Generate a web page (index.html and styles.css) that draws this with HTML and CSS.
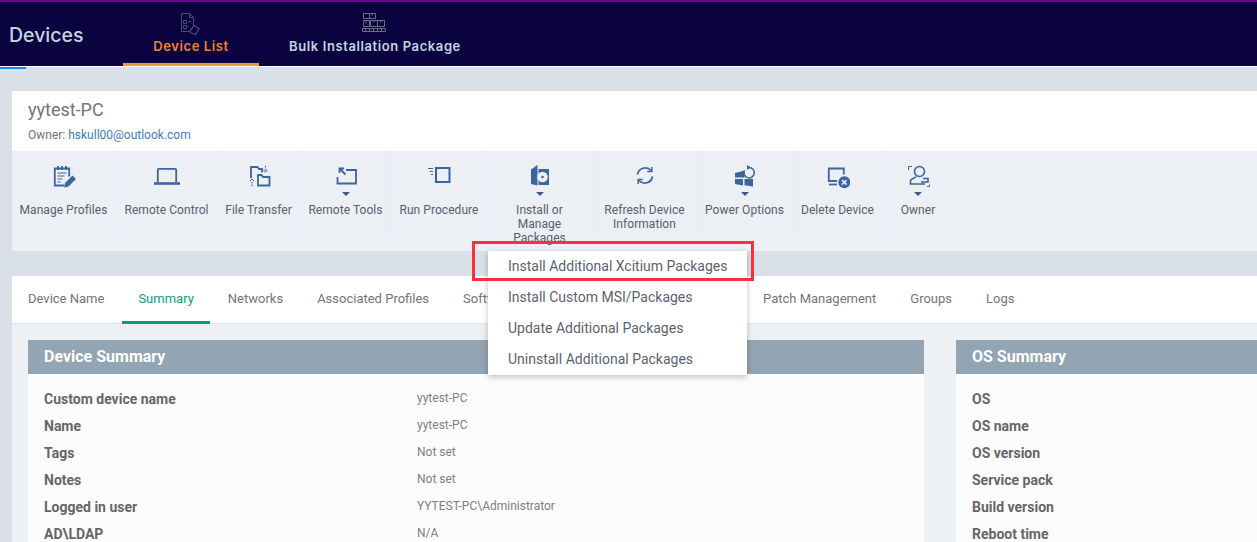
FILE: index.html
```html
<!DOCTYPE html>
<html lang="en">
<head>
  <meta charset="UTF-8" />
  <title>Devices</title>
  <link rel="stylesheet" href="styles.css">
</head>
<body>

<header class="topbar">
  <h1 class="topbar-title">Devices</h1>
  <nav class="topnav">
    <a class="topnav-item topnav-active">
      <svg class="topnav-icon" width="28" height="24" viewBox="0 0 28 24" fill="none" stroke="#4d4a75" stroke-width="1">
        <path d="M4.500 1.500h8l4 4v9M16.500 5.500h-4v-4M4.500 1.500v18h8"/>
        <path d="M6.500 8.500h3v3h-3zM6.500 13.500h3v3h-3zM11 9.500h3M11 14.500h1"/>
        <path d="M13 19l4-5.500 5 3-3.500 6-5-2z" stroke-width="1.300"/>
      </svg>
      <span>Device List</span>
    </a>
    <a class="topnav-item">
      <svg class="topnav-icon" width="28" height="24" viewBox="0 0 28 24" fill="none" stroke="#6e6c8e" stroke-width="1">
        <path d="M2.500 1.500h6v5h-6zM8.500 1.500h6v5h-6zM2.500 8.500h6v6h-6zM9.500 8.500h7v6h-7zM16.500 8.500h7v6h-7z"/>
        <path d="M11 1.500v2M5 8.500v3M13 8.500v2M20 8.500v2"/>
        <path d="M1.500 16.500h23v3h-23z"/>
        <path d="M4 18h1M8 18h1M12 18h1M16 18h1M20 18h1" stroke-width="2"/>
      </svg>
      <span>Bulk Installation Package</span>
    </a>
  </nav>
</header>
<div class="progress"></div>

<main class="page">
  <section class="device-head">
    <h2 class="device-name">yytest-PC</h2>
    <p class="device-owner">Owner: <a class="owner-link">hskull00@outlook.com</a></p>
  </section>

  <section class="toolbar">
    <div class="tool tool-1">
      <svg class="tool-icon" width="26" height="24" viewBox="0 0 26 24" fill="none" stroke="#3a659f" stroke-width="1.800">
        <path d="M13 20.500H3.800V3.500h14.400v8"/>
        <path d="M7 1v4M11 1v4M15 1v4"/>
        <path d="M6.500 8h9M6.500 11h7M6.500 14h5M6.500 17h3" stroke-width="1.200"/>
        <path d="M13 22.500l1-4.500 7.500-7.500 3.500 3.500-7.500 7.500z" fill="#3a659f" stroke="none"/>
      </svg>
      <span>Manage Profiles</span>
    </div>
    <div class="tool tool-2">
      <svg class="tool-icon" width="28" height="24" viewBox="0 0 28 24" fill="none" stroke="#3a659f" stroke-width="1.800">
        <path d="M4.800 17V4.800q0-1 1-1h16.400q1 0 1 1V17"/>
        <path d="M1 18.500h26" stroke-width="2.600"/>
      </svg>
      <span>Remote Control</span>
    </div>
    <div class="tool tool-3">
      <svg class="tool-icon" width="24" height="24" viewBox="0 0 24 24" fill="none" stroke="#3a659f" stroke-width="1.800">
        <path d="M4 13V2h6.500l1.500 2h3v3.500"/>
        <path d="M11 10h3.500l1.500 2h6.500v8.500H11z"/>
        <path d="M18.500 1v5.500M5 21v-5.500" stroke-width="1.200" stroke-dasharray="1.500 1.200"/>
        <path d="M16.500 5l2 2.200 2-2.200M3 16l2-2.200 2 2.200" stroke-width="1"/>
      </svg>
      <span>File Transfer</span>
    </div>
    <div class="tool tool-4">
      <svg class="tool-icon" width="24" height="24" viewBox="0 0 24 24" fill="none" stroke="#3a659f" stroke-width="1.800">
        <path d="M12 5h10v13.500H3.500V12"/>
        <path d="M5.500 3.500l6 6M5.500 8V3.500H10" stroke-width="1.800"/>
      </svg>
      <i class="caret"></i>
      <span>Remote Tools</span>
    </div>
    <div class="tool tool-5">
      <svg class="tool-icon" width="24" height="24" viewBox="0 0 24 24" fill="none" stroke="#3a659f" stroke-width="2">
        <path d="M9 3h13.500v14H9z"/>
        <path d="M1 3.500h5M2.500 6.500h3.500M4 9.500h2" stroke-width="1.200"/>
      </svg>
      <span>Run Procedure</span>
    </div>
    <div class="tool tool-6">
      <svg class="tool-icon" width="24" height="24" viewBox="0 0 24 24">
        <path d="M3 4.500 9.500 0V20.500L3 19z" fill="#3a659f"/>
        <path d="M10.500 4H21V20H10.500z" fill="#3a659f"/>
        <circle cx="14.500" cy="12" r="5.300" fill="#eceff4"/>
        <circle cx="14.500" cy="12" r="1.300" fill="#3a659f"/>
      </svg>
      <i class="caret"></i>
      <span class="label-narrow">Install or Manage Packages</span>
    </div>
    <div class="tool tool-7">
      <svg class="tool-icon" width="24" height="24" viewBox="0 0 24 24" fill="none" stroke="#3a659f" stroke-width="1.800">
        <path d="M4.500 9.500a7.800 7.800 0 0 1 13.500-4"/>
        <path d="M19.500 11.500a7.800 7.800 0 0 1-13.500 4"/>
        <path d="M18.800 2v4.500h-4.500M5.200 19v-4.500h4.500" stroke-width="1.500"/>
      </svg>
      <span>Refresh Device Information</span>
    </div>
    <div class="tool tool-8">
      <svg class="tool-icon" width="24" height="24" viewBox="-1 0 24 24">
        <path d="M1 8 9 6v6.500H1zM1 14h8v6.500L1 19zM10.500 14H19v7.500l-8.500-1.300z" fill="#3a659f"/>
        <path d="M9 6 10.500 5.500v7H9z" fill="#3a659f"/>
        <path d="M15 2.500a5.200 5.200 0 1 1-4.500 2.800" fill="none" stroke="#3a659f" stroke-width="1.500"/>
        <path d="M13 0l3.500 2.500-3.500 2.500z" fill="#3a659f"/>
      </svg>
      <i class="caret"></i>
      <span>Power Options</span>
    </div>
    <div class="tool tool-9">
      <svg class="tool-icon" width="24" height="24" viewBox="0 0 24 24" fill="none" stroke="#3a659f" stroke-width="1.800">
        <path d="M11 16H2.800V3.500h15V9.500"/>
        <path d="M3 19.500h8" stroke-width="1.800"/>
        <circle cx="18.300" cy="17.300" r="6" fill="#3a659f" stroke="none"/>
        <path d="M16 15l4.600 4.600M20.600 15l-4.600 4.600" stroke="#eceff4" stroke-width="1.600"/>
      </svg>
      <span>Delete Device</span>
    </div>
    <div class="tool tool-10">
      <svg class="tool-icon" width="24" height="24" viewBox="0 0 24 24" fill="none" stroke="#3a659f" stroke-width="1.600">
        <circle cx="13.500" cy="6.500" r="5"/>
        <path d="M10 11.500c-1 2.200-5 2-5.500 4v3.500h14.500"/>
        <path d="M17 13.500h5v3.500h-7" stroke-width="1.600"/>
        <path d="M2.500 5V1.500h3.500M23.500 19.500v2h-2.500" stroke-width="1"/>
      </svg>
      <i class="caret"></i>
      <span>Owner</span>
    </div>
  </section>

  <div class="gap"></div>

  <nav class="tabs">
    <a class="tab">Device Name</a>
    <a class="tab tab-active">Summary</a>
    <a class="tab">Networks</a>
    <a class="tab">Associated Profiles</a>
    <a class="tab tab-hidden">Software Inventory</a>
    <a class="tab">Patch Management</a>
    <a class="tab">Groups</a>
    <a class="tab">Logs</a>
  </nav>

  <section class="content">
    <div class="panel panel-device">
      <h3 class="panel-title">Device Summary</h3>
      <div class="panel-body">
        <div class="row"><b>Custom device name</b><span>yytest-PC</span></div>
        <div class="row"><b>Name</b><span>yytest-PC</span></div>
        <div class="row"><b>Tags</b><span>Not set</span></div>
        <div class="row"><b>Notes</b><span>Not set</span></div>
        <div class="row"><b>Logged in user</b><span>YYTEST-PC\Administrator</span></div>
        <div class="row"><b>AD\LDAP</b><span>N/A</span></div>
      </div>
    </div>
    <div class="panel panel-os">
      <h3 class="panel-title">OS Summary</h3>
      <div class="panel-body">
        <div class="row"><b>OS</b></div>
        <div class="row"><b>OS name</b></div>
        <div class="row"><b>OS version</b></div>
        <div class="row"><b>Service pack</b></div>
        <div class="row"><b>Build version</b></div>
        <div class="row"><b>Reboot time</b></div>
      </div>
    </div>
  </section>
</main>

<ul class="menu">
  <li>Install Additional Xcitium Packages</li>
  <li>Install Custom MSI/Packages</li>
  <li>Update Additional Packages</li>
  <li>Uninstall Additional Packages</li>
</ul>
<div class="highlight"></div>

</body>
</html>
```

FILE: styles.css
```css
html, body {
  margin: 0;
  padding: 0;
  height: 542px;
  overflow: hidden;
}
body {
  font-family: Roboto, "Liberation Sans", sans-serif;
  background-color: #d9e0e8;
  color: #666;
  position: relative;
}
.topbar {
  display: flex;
  height: 64px;
  background-color: #0a0340;
  border-top: 2px solid #6c0a8c;
  border-bottom: 1px solid #fff;
}
.topbar-title {
  margin: 0;
  width: 123px;
  padding: 21px 0 0 9px;
  box-sizing: border-box;
  font-family: Inter, sans-serif;
  font-size: 19.500px;
  font-weight: 500;
  line-height: 24px;
  color: #c5d3e0;
}
.topnav {
  display: flex;
}
.topnav-item {
  display: flex;
  flex-direction: column;
  align-items: center;
  box-sizing: border-box;
  height: 64px;
  padding-top: 10px;
  font-family: Inter, sans-serif;
  font-size: 13px;
  font-weight: 600;
  letter-spacing: 0.6px;
  color: #c5d3e0;
}
.topnav-item:first-child {
  width: 136px;
}
.topnav-item:last-child {
  width: 232px;
}
.topnav-icon {
  display: block;
  height: 24px;
}
.topnav-item span {
  margin-top: 1px;
  line-height: 18px;
}
.topnav-active {
  color: #f0842c;
  border-bottom: 3px solid #f39a36;
}
.progress {
  width: 26px;
  height: 2px;
  background-color: #1e88e5;
}
.page {
  margin: 22px 0 0 12px;
}
.device-head {
  height: 60px;
  background-color: #fff;
  padding: 8px 0 0 16px;
  box-sizing: border-box;
}
.device-name {
  margin: 0;
  font-size: 18px;
  font-weight: 400;
  line-height: 22px;
  color: #757575;
}
.device-owner {
  margin: 7px 0 0;
  font-size: 12px;
  line-height: 14px;
  color: #757575;
}
.owner-link {
  color: #3f7cc4;
}
.toolbar {
  display: flex;
  height: 100px;
  background-color: #eceff4;
}
.tool {
  position: relative;
  box-sizing: border-box;
  height: 87px;
  padding-top: 14px;
  text-align: center;
  font-size: 12px;
  font-weight: 400;
  line-height: 14px;
  letter-spacing: 0.05px;
  color: #57606f;
  border-right: 1px solid #e8ebf1;
}
.tool span {
  position: absolute;
  top: 52px;
  left: 0;
  right: 0;
}
.tool .label-narrow {
  left: 20px;
  right: 20px;
}
.tool-icon {
  display: block;
  margin: 0 auto;
}
.caret {
  display: block;
  width: 0;
  margin: 3px auto 0;
  border: 4px solid transparent;
  border-top: 4px solid #3a5a8a;
  border-bottom: 0;
}
.tool-1 { width: 104px; }
.tool-2 { width: 102px; }
.tool-3 { width: 82px; }
.tool-4 { width: 92px; }
.tool-5 { width: 95px; }
.tool-6 { width: 106px; }
.tool-7 { width: 104px; }
.tool-8 { width: 96px; }
.tool-9 { width: 90px; }
.tool-10 { width: 70px; border-right: 0; }
.gap {
  height: 25px;
}
.tabs {
  display: flex;
  height: 47px;
  background-color: #fff;
  border-bottom: 1px solid #e4e8ec;
  padding-left: 16px;
  font-size: 13px;
}
.tab {
  line-height: 45px;
  margin-right: 34px;
  color: #757575;
}
.tab-hidden {
  width: 266px;
}
.tab-active {
  position: relative;
  color: #0f9d80;
}
.tab-active::after {
  content: "";
  position: absolute;
  left: -16px;
  right: -16px;
  bottom: -1px;
  height: 3px;
  background-color: #009f80;
}
.content {
  display: flex;
  gap: 32px;
  padding: 16px 0 0 16px;
  background-color: #edf1f5;
  height: 219px;
  box-sizing: border-box;
  overflow: hidden;
}
.panel-device {
  width: 896px;
  flex: none;
}
.panel-os {
  flex: 1;
}
.panel-title {
  margin: 0;
  height: 34px;
  padding-left: 16px;
  background-color: #93a4b2;
  color: #fff;
  font-size: 16px;
  font-weight: 700;
  line-height: 33px;
}
.panel-body {
  background-color: #fcfcfc;
  padding-top: 12px;
  height: 200px;
}
.row {
  display: flex;
  height: 27px;
  padding-left: 16px;
  font-size: 14px;
  line-height: 27px;
  color: #666;
}
.row b {
  width: 373px;
  flex: none;
  font-weight: 700;
  font-size: 14px;
}
.row span {
  font-size: 12px;
  line-height: 24px;
  color: #808080;
}
.menu {
  position: absolute;
  left: 488px;
  top: 251px;
  width: 259px;
  margin: 0;
  padding: 0;
  list-style: none;
  background-color: #fff;
  box-shadow: 0 2px 6px rgba(0, 0, 0, 0.25);
}
.menu li {
  height: 31px;
  padding-left: 20px;
  font-size: 14px;
  line-height: 31px;
  color: #5c6270;
}
.highlight {
  position: absolute;
  left: 472px;
  top: 241px;
  width: 276px;
  height: 34px;
  border: 3px solid #f73142;
}
```
